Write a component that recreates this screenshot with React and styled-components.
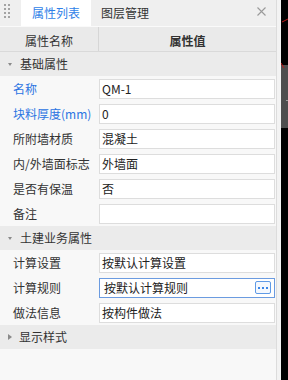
import React from 'react';
import styled, { createGlobalStyle } from 'styled-components';

const GlobalStyle = createGlobalStyle`
  body {
    margin: 0;
    font-family: "Noto Sans CJK SC", "Liberation Sans", sans-serif;
    font-size: 12px;
    color: #333;
  }
`;

const Screen = styled.div`
  display: flex;
  width: 288px;
  height: 380px;
  overflow: hidden;
`;

const Panel = styled.div`
  width: 276px;
  flex-shrink: 0;
  display: flex;
  flex-direction: column;
  background: #f8f8f8;
  border-right: 1px solid #dcdcdc;
`;

const Gutter = styled.div`
  width: 4px;
  flex-shrink: 0;
  background: #f3f3f3;
`;

const Canvas = styled.div`
  flex: 1;
  background: #000;
  svg { display: block; }
`;

const TabBar = styled.div`
  height: 26px;
  display: flex;
  align-items: stretch;
  background: #efefef;
  border-bottom: 1px solid #fafafa;
`;

const Grip = styled.div`
  width: 21px;
  display: grid;
  grid-template-columns: repeat(2, 2px);
  grid-auto-rows: 2px;
  gap: 2px;
  padding: 4px 0 0 4px;
  box-sizing: border-box;
  align-content: start;

  span {
    background: #a3a3a3;
  }
`;

const Tab = styled.div`
  display: flex;
  align-items: center;
  justify-content: center;
  padding: 0 ${p => (p.$active ? '11px' : '10px')};
  background: ${p => (p.$active ? '#fff' : 'transparent')};
  color: ${p => (p.$active ? '#2f7fe8' : '#333')};
  line-height: 16px;
`;

const Close = styled.div`
  margin-left: auto;
  width: 9px;
  padding: 0 10px 0 0;
  display: flex;
  align-items: center;
  margin-top: -4px;
`;

const HeaderRow = styled.div`
  height: 24px;
  display: grid;
  grid-template-columns: 99px 1fr;
  background: #eaeaea;
  border-bottom: 1px solid #d9d9d9;
`;

const HeaderCell = styled.div`
  display: flex;
  align-items: center;
  justify-content: center;
  padding-top: 3px;
  font-weight: ${p => (p.$bold ? 700 : 400)};
  border-right: ${p => (p.$divider ? '1px solid #d6d6d6' : 'none')};
  line-height: 16px;
`;

const GroupRow = styled.div`
  height: 24px;
  display: flex;
  align-items: center;
  background: #ebebeb;
  padding-left: 7px;
  line-height: 16px;
`;

const Caret = styled.span`
  width: 0;
  height: 0;
  margin-right: 8px;
  ${p =>
    p.$open
      ? `border-left: 2.5px solid transparent;
         border-right: 2.5px solid transparent;
         border-top: 3px solid #8a8a8a;
         margin-left: 1px;
         margin-right: 8px;`
      : `border-top: 3px solid transparent;
         border-bottom: 3px solid transparent;
         border-left: 4px solid #8a8a8a;
         margin-left: 1px;
         margin-right: 7px;`}
`;

const Row = styled.div`
  height: 25px;
  display: grid;
  grid-template-columns: 99px 1fr;
  align-items: center;
`;

const Label = styled.div`
  padding-left: 13px;
  color: ${p => (p.$link ? '#2b74e2' : '#333')};
  line-height: 16px;
  white-space: nowrap;
`;

const ValueBox = styled.div`
  position: relative;
  height: 20px;
  margin: 1px 1px 0 0;
  box-sizing: border-box;
  border: 1px solid ${p => (p.$focus ? '#6b9be0' : '#dddddd')};
  background: #fff;
  display: flex;
  align-items: center;
  padding-left: ${p => (p.$focus ? '4px' : '2px')};
  color: #222;
  line-height: 16px;
  white-space: nowrap;
`;

const MoreButton = styled.div`
  position: absolute;
  right: 3px;
  top: 2px;
  width: 16px;
  height: 13px;
  box-sizing: border-box;
  border: 1px solid #5f9ae6;
  border-radius: 2px;
  background: #f4f8fe;
  display: flex;
  align-items: center;
  justify-content: center;
  gap: 2px;

  span {
    width: 2px;
    height: 2px;
    background: #3a86e8;
  }
`;

const groups = [
  {
    title: '基础属性',
    open: true,
    rows: [
      { label: '名称', value: 'QM-1', link: true },
      { label: '块料厚度(mm)', value: '0', link: true },
      { label: '所附墙材质', value: '混凝土' },
      { label: '内/外墙面标志', value: '外墙面' },
      { label: '是否有保温', value: '否' },
      { label: '备注', value: '' },
    ],
  },
  {
    title: '土建业务属性',
    open: true,
    rows: [
      { label: '计算设置', value: '按默认计算设置' },
      { label: '计算规则', value: '按默认计算规则', focus: true },
      { label: '做法信息', value: '按构件做法' },
    ],
  },
  { title: '显示样式', open: false, rows: [] },
];

export default function App() {
  return (
    <>
      <GlobalStyle />
      <Screen>
        <Panel>
          <TabBar>
            <Grip>
              {Array.from({ length: 8 }).map((_, i) => (
                <span key={i} />
              ))}
            </Grip>
            <Tab $active>属性列表</Tab>
            <Tab>图层管理</Tab>
            <Close>
              <svg width="9" height="9" viewBox="0 0 9 9">
                <path d="M0.5 0.5 L8.5 8.5 M8.5 0.5 L0.5 8.5" stroke="#9a9a9a" strokeWidth="1.1" />
              </svg>
            </Close>
          </TabBar>
          <HeaderRow>
            <HeaderCell $divider>属性名称</HeaderCell>
            <HeaderCell $bold>属性值</HeaderCell>
          </HeaderRow>
          {groups.map(g => (
            <React.Fragment key={g.title}>
              <GroupRow>
                <Caret $open={g.open} />
                {g.title}
              </GroupRow>
              {g.rows.map(r => (
                <Row key={r.label}>
                  <Label $link={r.link}>{r.label}</Label>
                  <ValueBox $focus={r.focus}>
                    {r.value}
                    {r.focus && (
                      <MoreButton>
                        <span />
                        <span />
                        <span />
                      </MoreButton>
                    )}
                  </ValueBox>
                </Row>
              ))}
            </React.Fragment>
          ))}
        </Panel>
        <Gutter />
        <Canvas>
          <svg width="7" height="380" viewBox="0 0 7 380">
            <rect x="0" y="65" width="7" height="63" fill="#4e4e4e" />
            <rect x="5" y="100" width="2" height="1" fill="#a0a0a0" />
            <line x1="1" y1="22" x2="7" y2="19" stroke="#c01818" strokeWidth="1" />
            <line x1="0" y1="63" x2="3" y2="68" stroke="#c01818" strokeWidth="1" />
          </svg>
        </Canvas>
      </Screen>
    </>
  );
}
